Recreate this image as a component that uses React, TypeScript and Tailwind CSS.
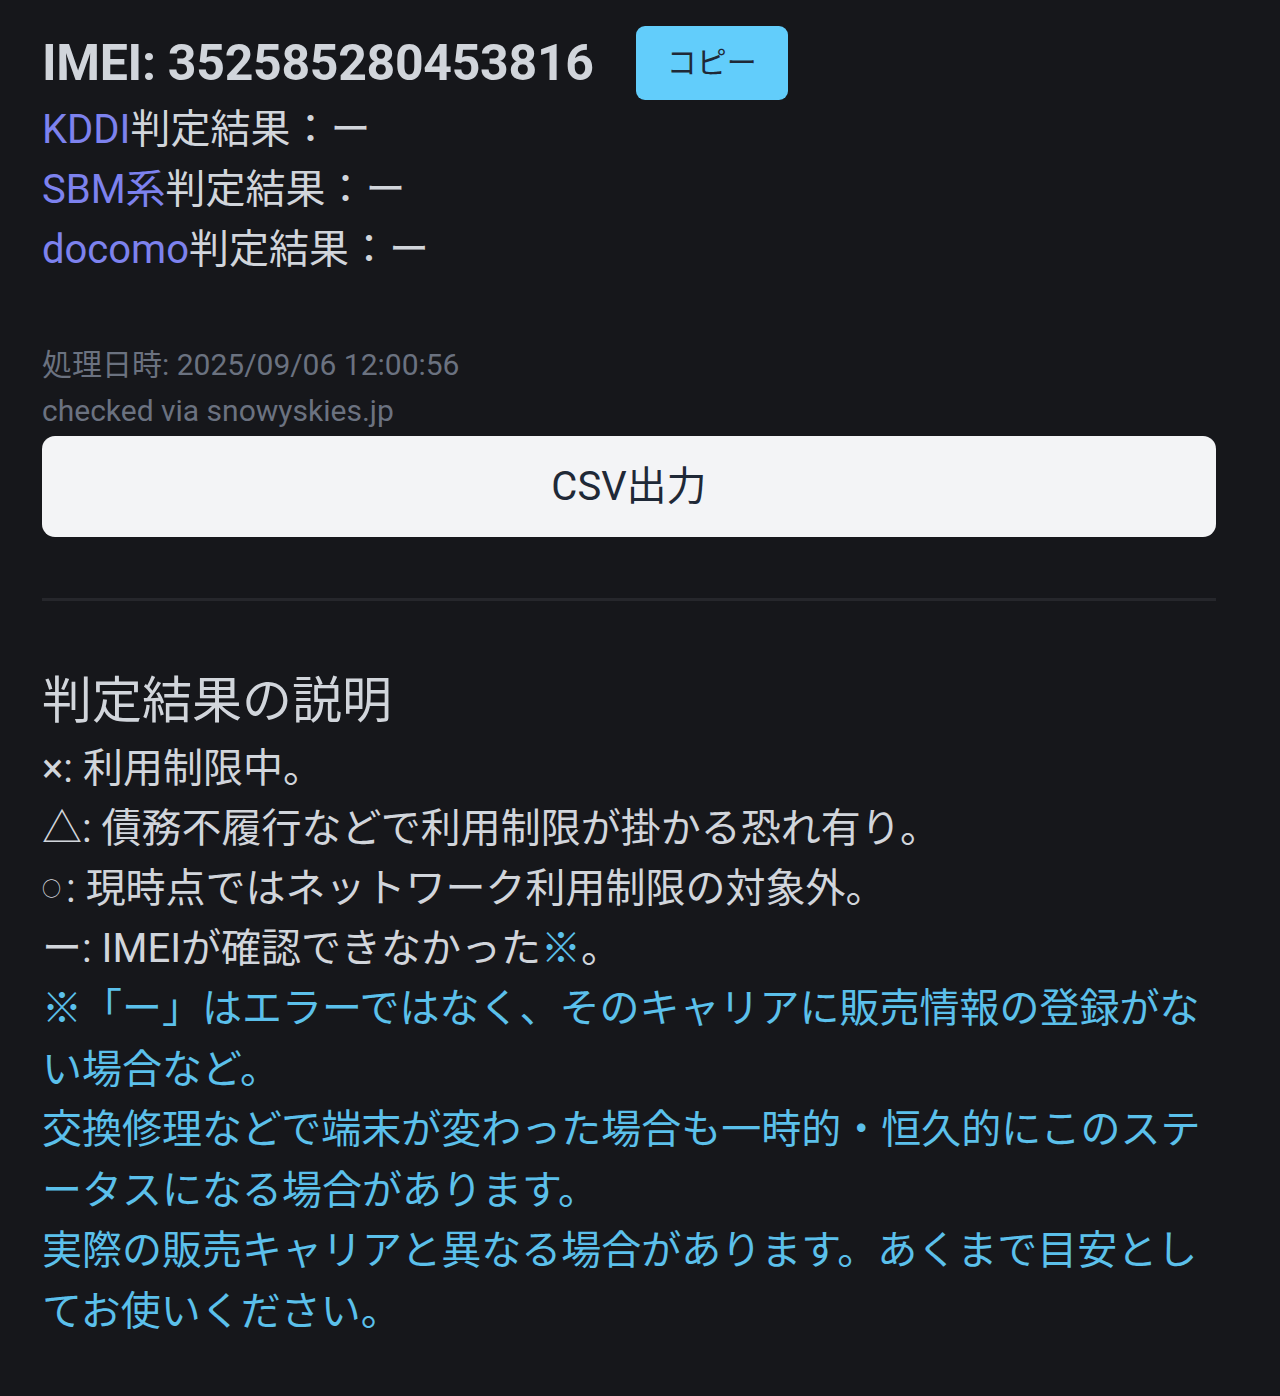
import React from "react";

const F = { fontFamily: 'Roboto, "Noto Sans CJK JP", sans-serif' };

export default function App() {
  return (
    <div
      className="min-h-[1396px] w-[1280px] bg-[#16171b] pl-[42px] pr-[64px] pt-[26px] pb-[40px] text-[#d1d5db]"
      style={F}
    >
      <div className="flex items-center gap-[42px]">
        <div className="text-[50px] font-bold leading-[70px] tracking-[-0.3px] text-[#d1d5db]">IMEI: 352585280453816</div>
        <button className="flex h-[74px] w-[152px] items-center justify-center rounded-[9px] bg-[#62cdfb] text-[30px] leading-[40px] text-[#1f2937]">
          コピー
        </button>
      </div>
      <div className="text-[40px] leading-[60px]">
        <div><span className="text-[#7d82ee]">KDDI</span>判定結果：ー</div>
        <div><span className="text-[#7d82ee]">SBM系</span>判定結果：ー</div>
        <div><span className="text-[#7d82ee]">docomo</span>判定結果：ー</div>
      </div>
      <div className="mt-[62px] text-[30px] leading-[46px] text-[#6b7280]">
        <div>処理日時: 2025/09/06 12:00:56</div>
        <div>checked via snowyskies.jp</div>
      </div>
      <button className="mt-[2px] flex h-[101px] w-full items-center justify-center rounded-[13px] bg-[#f3f4f6] text-[40px] text-[#1f2937]">
        CSV出力
      </button>
      <div className="mt-[61px] h-[3px] w-full bg-[#26272c]" />
      <div className="mt-[62px] text-[50px] leading-[76px] text-[#d1d5db]">判定結果の説明</div>
      <div className="text-[40px] leading-[60px]">
        <div>×: 利用制限中。</div>
        <div>△: 債務不履行などで利用制限が掛かる恐れ有り。</div>
        <div><span className="mr-[5px] text-[19px] leading-[0] align-[6px]">○</span>: 現時点ではネットワーク利用制限の対象外。</div>
        <div>ー: IMEIが確認できなかった<span className="text-[#5bc0eb]">※</span>。</div>
        <div className="text-[#5bc0eb] leading-[60.5px]">
          <div>※「ー」はエラーではなく、そのキャリアに販売情報の登録がない場合など。</div>
          <div>交換修理などで端末が変わった場合も一時的・恒久的にこのステータスになる場合があります。</div>
          <div>実際の販売キャリアと異なる場合があります。あくまで目安としてお使いください。</div>
        </div>
      </div>
    </div>
  );
}
